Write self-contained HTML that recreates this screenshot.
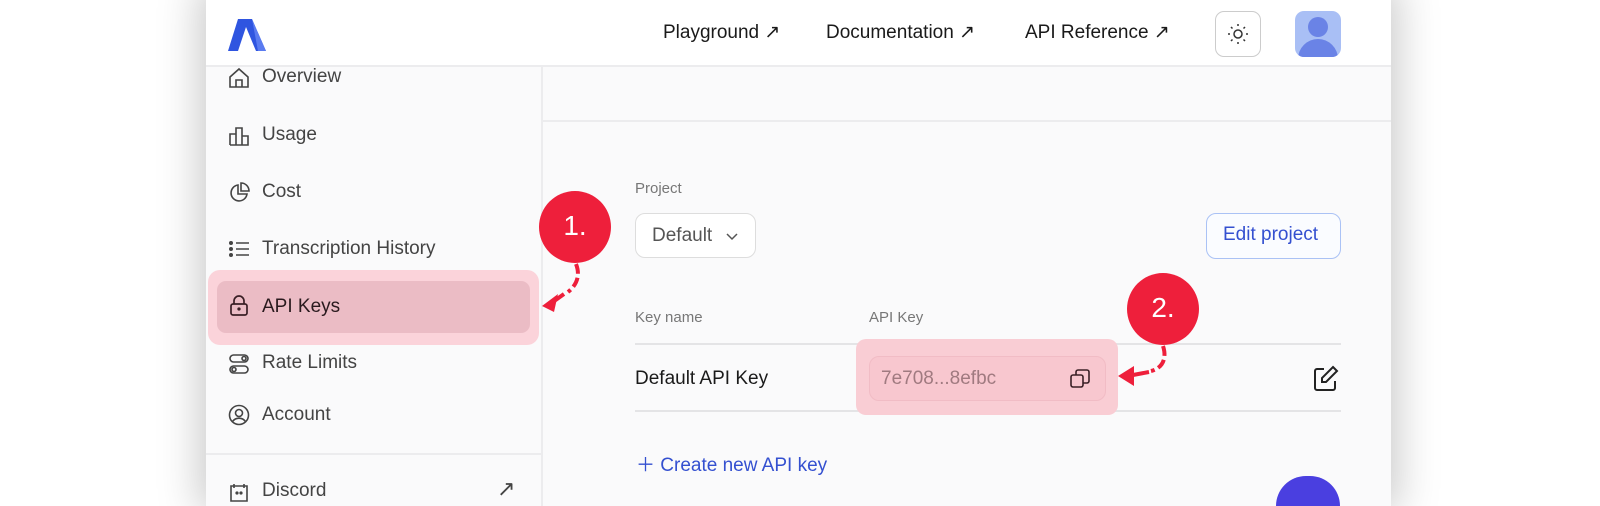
<!DOCTYPE html>
<html style="width:1600px;height:506px;overflow:hidden"><head><meta charset="utf-8"><style>
*{margin:0;padding:0;box-sizing:border-box}
body{width:1600px;height:506px;overflow:hidden;background:#fff;font-family:"Liberation Sans",sans-serif;position:relative}
.a{position:absolute}
.win{left:206px;top:-10px;width:1185px;height:516px;background:#fafafb;box-shadow:0 0 40px 6px rgba(0,0,0,.22)}
.t{font-size:19px;color:#1a1a1a;white-space:nowrap}
.nav{font-size:19px;color:#444;white-space:nowrap}
svg{position:absolute;overflow:visible}
</style></head><body>
<div class="a win"></div>
<div class="a" style="left:206px;top:0;width:1185px;height:67px;background:#fff;border-bottom:2px solid #ececee"></div>
<svg style="left:228px;top:17px" width="40" height="36"><path d="M10 2 H24 L38 34 H28 L18 10 L10 34 H0 Z" fill="#2f55e0"/><path d="M24 2 L38 34 H30 Z" fill="#5a7bf0"/></svg>
<div class="a t" style="left:663px;top:21px">Playground ↗</div>
<div class="a t" style="left:826px;top:21px">Documentation ↗</div>
<div class="a t" style="left:1025px;top:21px">API Reference ↗</div>
<div class="a" style="left:1215px;top:11px;width:46px;height:46px;border:1.5px solid #ccc;border-radius:9px;background:#fff"></div>
<svg style="left:1228px;top:24px" width="20" height="20" stroke="#333" stroke-width="1.5" fill="none"><circle cx="10" cy="10" r="4"/><path d="M10 0v2M10 18v2M0 10h2M18 10h2M3 3l1.5 1.5M15.5 15.5L17 17M3 17l1.5-1.5M15.5 4.5L17 3"/></svg>
<div class="a" style="left:1295px;top:11px;width:46px;height:46px;border-radius:9px;background:#a9bff5;overflow:hidden">
<div class="a" style="left:13px;top:6px;width:20px;height:20px;border-radius:50%;background:#6a83e6"></div>
<div class="a" style="left:3px;top:28px;width:40px;height:30px;border-radius:20px 20px 0 0;background:#6a83e6"></div></div>
<div class="a" style="left:541px;top:67px;width:2px;height:440px;background:#ececee"></div>
<div class="a" style="left:543px;top:120px;width:848px;height:2px;background:#ececee"></div>
<div class="a" style="left:206px;top:453px;width:335px;height:2px;background:#ececee"></div>
<svg style="left:229px;top:68px" width="20" height="20" stroke="#444" stroke-width="1.6" fill="none"><path d="M1 9 L10 1 L19 9 V19 H1 Z M7 19 V12 H13 V19"/></svg>
<div class="a nav" style="left:262px;top:66px">Overview</div>
<svg style="left:229px;top:126px" width="20" height="20" stroke="#444" stroke-width="1.6" fill="none"><path d="M1 19V8H7V19M7 19V2H13V19M13 19V10H19V19H1"/></svg>
<div class="a nav" style="left:262px;top:124px">Usage</div>
<svg style="left:228px;top:182px" width="22" height="22" stroke="#444" stroke-width="1.6" fill="none"><path d="M10 3 A8 8 0 1 0 19 12 H10 Z"/><path d="M13 1 A8 8 0 0 1 21 9 H13 Z"/></svg>
<div class="a nav" style="left:262px;top:181px">Cost</div>
<svg style="left:229px;top:241px" width="20" height="16" stroke="#444" stroke-width="1.6" fill="#444"><circle cx="2" cy="2" r="1.2"/><circle cx="2" cy="8" r="1.2"/><circle cx="2" cy="14" r="1.2"/><path d="M7 2H20M7 8H20M7 14H20" fill="none"/></svg>
<div class="a nav" style="left:262px;top:238px">Transcription History</div>
<div class="a" style="left:208px;top:270px;width:331px;height:75px;background:#fbd3da;border-radius:12px"></div>
<div class="a" style="left:217px;top:281px;width:313px;height:52px;background:#ebbcc5;border-radius:9px"></div>
<svg style="left:230px;top:296px" width="18" height="20" stroke="#3a2026" stroke-width="1.7" fill="none"><rect x="1" y="8" width="16" height="11" rx="2"/><path d="M4 8V5a5 5 0 0 1 10 0v3"/><circle cx="9" cy="13" r=".8" fill="#3a2026"/></svg>
<div class="a nav" style="left:262px;top:296px;color:#2a1a1e">API Keys</div>
<svg style="left:229px;top:354px" width="20" height="20" stroke="#444" stroke-width="1.6" fill="none"><rect x="1" y="1" width="18" height="7" rx="3.5"/><rect x="1" y="12" width="18" height="7" rx="3.5"/><circle cx="15" cy="4.5" r="2"/><circle cx="5" cy="15.5" r="2"/></svg>
<div class="a nav" style="left:262px;top:352px">Rate Limits</div>
<svg style="left:228px;top:404px" width="22" height="22" stroke="#444" stroke-width="1.6" fill="none"><circle cx="11" cy="11" r="9.5"/><circle cx="11" cy="9" r="3.5"/><path d="M4.5 17.5a8 8 0 0 1 13 0"/></svg>
<div class="a nav" style="left:262px;top:404px">Account</div>
<svg style="left:229px;top:482px" width="20" height="20" stroke="#444" stroke-width="1.6" fill="none"><path d="M2 4h16v15H2z M5 2v4M15 2v4"/><circle cx="8" cy="11" r=".8" fill="#444"/><circle cx="12" cy="11" r=".8" fill="#444"/></svg>
<div class="a nav" style="left:262px;top:480px">Discord</div>
<div class="a nav" style="left:497px;top:476px;font-size:22px">↗</div>
<div class="a" style="left:635px;top:180px;font-size:15px;color:#777">Project</div>
<div class="a" style="left:635px;top:213px;width:121px;height:45px;background:#fff;border:1.5px solid #ddd;border-radius:10px"></div>
<div class="a" style="left:652px;top:225px;font-size:19px;color:#555">Default</div>
<svg style="left:726px;top:233px" width="12" height="8" stroke="#555" stroke-width="1.5" fill="none"><path d="M1 1l5 5 5-5"/></svg>
<div class="a" style="left:1206px;top:213px;width:135px;height:46px;background:#fafcff;border:1.5px solid #aac2f5;border-radius:10px"></div>
<div class="a" style="left:1223px;top:224px;font-size:19px;color:#3450d0">Edit project</div>
<div class="a" style="left:635px;top:309px;font-size:15px;color:#777">Key name</div>
<div class="a" style="left:869px;top:309px;font-size:15px;color:#777">API Key</div>
<div class="a" style="left:635px;top:343px;width:706px;height:2px;background:#e4e4e6"></div>
<div class="a" style="left:635px;top:410px;width:706px;height:2px;background:#e4e4e6"></div>
<div class="a" style="left:856px;top:339px;width:262px;height:76px;background:#f9cdd4;border-radius:10px"></div>
<div class="a" style="left:869px;top:356px;width:237px;height:45px;border:1.5px solid #f1bcc5;border-radius:10px;background:#f8c7cf"></div>
<div class="a" style="left:881px;top:368px;font-size:19px;color:#a07a80">7e708...8efbc</div>
<svg style="left:1070px;top:369px" width="20" height="20" stroke="#3a2026" stroke-width="1.6" fill="none"><rect x="1" y="6" width="12" height="12" rx="2"/><path d="M6 6V3a2 2 0 0 1 2-2h9a2 2 0 0 1 2 2v9a2 2 0 0 1-2 2h-4"/></svg>
<div class="a t" style="left:635px;top:368px">Default API Key</div>
<svg style="left:1313px;top:366px" width="26" height="26" stroke="#222" stroke-width="2" fill="none"><path d="M11 3H4a2 2 0 0 0-2 2v17a2 2 0 0 0 2 2h16a2 2 0 0 0 2-2v-7"/><path d="M20 1l4 4-11 11H9v-4z"/></svg>
<div class="a" style="left:636px;top:450px;font-size:19px;color:#3450d0">＋ Create new API key</div>
<div class="a" style="left:1276px;top:476px;width:64px;height:30px;border-radius:32px 32px 0 0;background:#4a3fe0"></div>
<div class="a" style="left:539px;top:191px;width:72px;height:72px;border-radius:50%;background:#ee1f3b;color:#fff;font-size:28px;text-align:center;line-height:70px">1.</div>
<svg style="left:540px;top:262px" width="45" height="60" stroke="#ee1f3b" stroke-width="4" fill="none"><path d="M36 2c4 10 2 20-8 28" stroke-dasharray="10 4"/><path d="M24 32 L10 42" /><path d="M2 44 L18 32 L14 50 Z" fill="#ee1f3b" stroke="none"/></svg>
<div class="a" style="left:1127px;top:273px;width:72px;height:72px;border-radius:50%;background:#ee1f3b;color:#fff;font-size:28px;text-align:center;line-height:70px">2.</div>
<svg style="left:1115px;top:344px" width="60" height="50" stroke="#ee1f3b" stroke-width="4" fill="none"><path d="M48 2c4 12 0 22-12 25" stroke-dasharray="10 4"/><path d="M34 28 L18 31"/><path d="M3 32 L19 22 L19 42 Z" fill="#ee1f3b" stroke="none"/></svg>
</body></html>
